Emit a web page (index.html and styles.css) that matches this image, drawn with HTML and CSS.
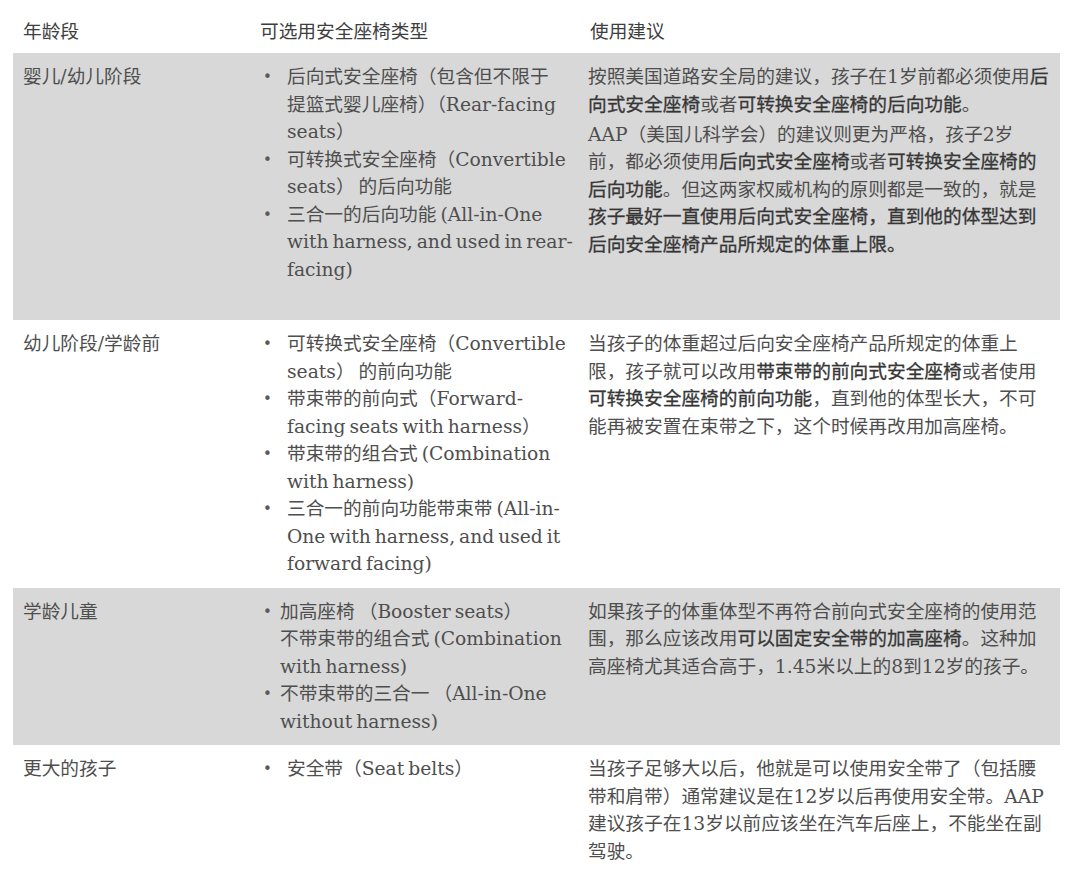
FILE: index.html
```html
<!DOCTYPE html>
<html lang="zh-CN">
<head>
<meta charset="utf-8">
<title>安全座椅</title>
<link rel="stylesheet" href="styles.css">
</head>
<body>
<div class="page">
  <div class="table">
    <div class="row head">
      <div class="cell c1">年龄段</div>
      <div class="cell c2">可选用安全座椅类型</div>
      <div class="cell c3">使用建议</div>
    </div>

    <div class="row gray tall">
      <div class="cell c1">婴儿/幼儿阶段</div>
      <div class="cell c2">
        <ul class="list">
          <li>后向式安全座椅（包含但不限于<br>提篮式婴儿座椅）（Rear-facing<br>seats）</li>
          <li>可转换式安全座椅（Convertible<br>seats） 的后向功能</li>
          <li>三合一的后向功能 (All-in-One<br>with harness, and used in rear-<br>facing)</li>
        </ul>
      </div>
      <div class="cell c3">
        <p>按照美国道路安全局的建议，孩子在1岁前都必须使用<b>后</b><br><b>向式安全座椅</b>或者<b>可转换安全座椅的后向功能</b>。</p>
        <p>AAP（美国儿科学会）的建议则更为严格，孩子2岁<br>前，都必须使用<b>后向式安全座椅</b>或者<b>可转换安全座椅的</b><br><b>后向功能</b>。但这两家权威机构的原则都是一致的，就是<br><b>孩子最好一直使用后向式安全座椅，直到他的体型达到</b><br><b>后向安全座椅产品所规定的体重上限。</b></p>
      </div>
    </div>

    <div class="row">
      <div class="cell c1">幼儿阶段/学龄前</div>
      <div class="cell c2">
        <ul class="list">
          <li>可转换式安全座椅（Convertible<br>seats） 的前向功能</li>
          <li>带束带的前向式（Forward-<br>facing seats with harness）</li>
          <li>带束带的组合式 (Combination<br>with harness)</li>
          <li>三合一的前向功能带束带 (All-in-<br>One with harness, and used it<br>forward facing)</li>
        </ul>
      </div>
      <div class="cell c3">
        <p>当孩子的体重超过后向安全座椅产品所规定的体重上<br>限，孩子就可以改用<b>带束带的前向式安全座椅</b>或者使用<br><b>可转换安全座椅的前向功能</b>，直到他的体型长大，不可<br>能再被安置在束带之下，这个时候再改用加高座椅。</p>
      </div>
    </div>

    <div class="row gray">
      <div class="cell c1">学龄儿童</div>
      <div class="cell c2">
        <ul class="list compact">
          <li>加高座椅 （Booster seats）<br>不带束带的组合式 (Combination<br>with harness)</li>
          <li>不带束带的三合一 （All-in-One<br>without harness)</li>
        </ul>
      </div>
      <div class="cell c3">
        <p>如果孩子的体重体型不再符合前向式安全座椅的使用范<br>围，那么应该改用<b>可以固定安全带的加高座椅</b>。这种加<br>高座椅尤其适合高于，1.45米以上的8到12岁的孩子。</p>
      </div>
    </div>

    <div class="row">
      <div class="cell c1">更大的孩子</div>
      <div class="cell c2">
        <ul class="list">
          <li>安全带（Seat belts）</li>
        </ul>
      </div>
      <div class="cell c3">
        <p>当孩子足够大以后，他就是可以使用安全带了（包括腰<br>带和肩带）通常建议是在12岁以后再使用安全带。AAP<br>建议孩子在13岁以前应该坐在汽车后座上，不能坐在副<br>驾驶。</p>
      </div>
    </div>
  </div>
</div>
</body>
</html>
```

FILE: styles.css
```css
html, body {
  margin: 0;
  padding: 0;
  background: #ffffff;
}

body {
  font-family: "DejaVu Serif", "Noto Sans CJK SC", serif;
  font-size: 18.7px;
  line-height: 27.5px;
  color: #4e4e4e;
}

.page {
  padding: 8px 0 0 13px;
}

.table {
  width: 1047px;
}

.row {
  display: grid;
  grid-template-columns: 237px 328px 482px;
}

.row.gray {
  background: #d8d8d8;
}

.cell {
  padding: 10px;
  white-space: nowrap;
}

.head .cell {
  padding-bottom: 7.5px;
  color: #3e3e3e;
}

.row.tall .cell {
  padding-bottom: 37px;
}

.c2 {
  padding-left: 12px;
  word-spacing: -2px;
}

.c3 {
  padding-left: 10px;
}

.head .c2 {
  padding-left: 10px;
}

.head .c3 {
  padding-left: 12px;
}

.c3 p {
  margin: 0 0 2.5px 0;
}

.c3 p:last-child {
  margin-bottom: 0;
}

b {
  font-weight: normal;
  color: #363636;
  -webkit-text-stroke: 0.3px #363636;
}

.list {
  list-style: none;
  margin: 0;
  padding: 0;
}

.list li {
  display: flex;
}

.list li::before {
  content: "•";
  flex: 0 0 25px;
  padding-top: 1px;
  padding-left: 1px;
  box-sizing: border-box;
  font-family: "DejaVu Sans", sans-serif;
  font-size: 15px;
  color: #5a5a5a;
}

.list.compact li::before {
  flex-basis: 18px;
}
```
